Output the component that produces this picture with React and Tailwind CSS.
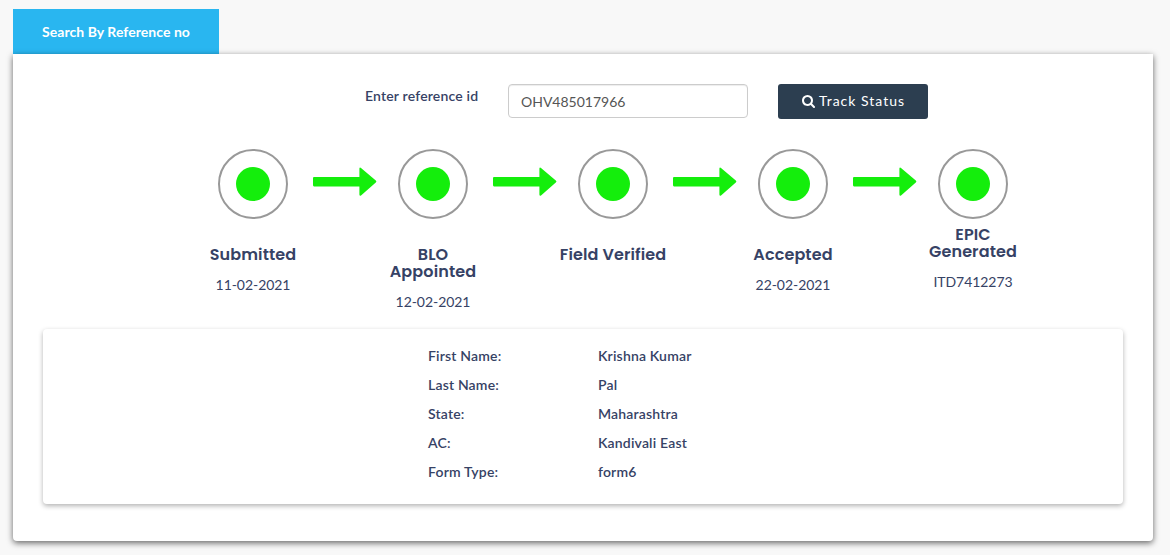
const steps = [
  { title: 'Submitted', note: '11-02-2021' },
  { title: 'BLO Appointed', note: '12-02-2021' },
  { title: 'Field Verified', note: '' },
  { title: 'Accepted', note: '22-02-2021' },
  { title: 'EPIC Generated', note: 'ITD7412273', tight: true },
];

const details = [
  ['First Name:', 'Krishna Kumar'],
  ['Last Name:', 'Pal'],
  ['State:', 'Maharashtra'],
  ['AC:', 'Kandivali East'],
  ['Form Type:', 'form6'],
];

function SearchIcon() {
  return (
    <svg className="size-[13px]" viewBox="0 0 1664 1664" fill="currentColor">
      <path d="M1152 704q0-185-131.500-316.500t-316.500-131.500-316.500 131.500-131.500 316.500 131.500 316.500 316.500 131.500 316.500-131.500 131.500-316.500zM1664 1536q0 52-38 90t-90 38q-54 0-90-38l-343-342q-179 124-399 124-143 0-273.500-55.500t-225-150-150-225-55.500-273.500 55.500-273.500 150-225 225-150 273.500-55.500 273.500 55.500 225 150 150 225 55.500 273.500q0 220-124 399l343 343q37 37 37 90z" />
    </svg>
  );
}

function Arrow() {
  return (
    <svg className="mt-[18px] h-8 w-16 shrink-0 overflow-visible" viewBox="0 0 64 32" fill="#14ee0c">
      <path d="M3 9.900Q2 9.900 2 11V18Q2 19.400 3 19.400H48.400V27.600Q48.600 29.400 50 28.500L64.800 15.600Q66 14.500 64.800 13.400L50 1Q48.600 0 48.400 1.600V9.900Z" />
    </svg>
  );
}

function Step({ title, note, tight }) {
  return (
    <div className="flex w-[116px] shrink-0 flex-col items-center text-center">
      <div className="flex size-[70px] items-center justify-center rounded-full border-2 border-[#999]">
        <div className="size-[34px] rounded-full bg-[#14ee0c]" />
      </div>
      <h4
        className={`${tight ? 'mt-[7px]' : 'mt-[27px]'} w-full font-['Poppins','Inter',sans-serif] text-[16px] leading-[17px] font-semibold tracking-[0.12px]`}
      >
        {title}
      </h4>
      <p className="mt-3 text-sm leading-5 font-normal tracking-[-0.05px]">{note}</p>
    </div>
  );
}

export default function App() {
  return (
    <div className="h-[555px] overflow-hidden bg-[#f8f8f8] px-[13px] pt-[9px] font-['Lato',sans-serif] text-sm text-[#364265]">
      <button className="flex h-[45px] w-[206px] items-center justify-center bg-[#29b6f0] font-bold tracking-[0.05px] text-white">
        Search By Reference no
      </button>
      <main className="h-[487px] w-[1140px] rounded-b-[4px] bg-white px-[30px] pt-[30px] shadow-[0_2px_6px_rgba(0,0,0,0.6)]">
        <form className="flex items-start pl-[322px]">
          <label className="mt-[2px] w-[143px] leading-5 font-semibold tracking-[0.18px]">Enter reference id</label>
          <input
            className="h-[34px] w-[240px] rounded-[4px] border border-[#ccc] px-3 text-sm text-[#555] shadow-[inset_0_1px_1px_rgba(0,0,0,0.075)]"
            defaultValue="OHV485017966"
          />
          <button
            type="button"
            className="ml-[30px] flex h-[35px] w-[150px] items-center justify-center gap-1 rounded-[3px] bg-[#2c3e50] pb-px pl-px tracking-[1px] text-white"
          >
            <SearchIcon />
            Track Status
          </button>
        </form>
        <section className="mt-[30px] flex h-[180px] items-start pl-[152px]">
          {steps.map((step, i) => (
            <div key={step.title} className="flex shrink-0 items-start">
              <Step {...step} />
              {i < steps.length - 1 && <Arrow />}
            </div>
          ))}
        </section>
        <section className="h-[175px] rounded-[4px] bg-white pt-[17px] pl-[385px] shadow-[0_2px_5px_rgba(0,0,0,0.3)]">
          <dl className="flex flex-col gap-[9px] leading-5 font-semibold tracking-[0.18px]">
            {details.map(([name, value]) => (
              <div key={name} className="flex">
                <dt className="w-[170px]">{name}</dt>
                <dd>{value}</dd>
              </div>
            ))}
          </dl>
        </section>
      </main>
    </div>
  );
}
